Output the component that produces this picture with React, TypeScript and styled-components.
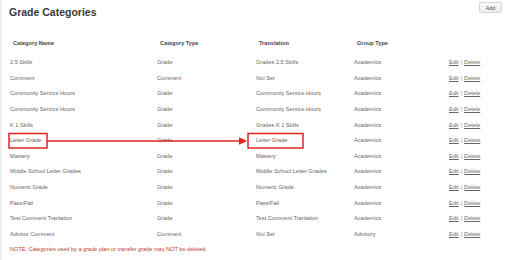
import React from 'react';
import styled, { createGlobalStyle } from 'styled-components';

const GlobalStyle = createGlobalStyle`
  html, body {
    margin: 0;
    padding: 0;
    background: #ffffff;
  }
  body {
    font-family: "Liberation Sans", Arial, sans-serif;
  }
`;

const Page = styled.div`
  position: relative;
  width: 508px;
  height: 260px;
  box-sizing: border-box;
  border-left: 2px solid #ececec;
  background: #fff;
  overflow: hidden;
`;

const TitleBar = styled.div`
  display: flex;
  justify-content: space-between;
  align-items: flex-start;
  height: 24px;
  padding: 0 6px 0 7px;
`;

const Title = styled.h1`
  margin: 0;
  line-height: 24px;
  font-size: 10.5px;
  font-weight: bold;
  color: #3a3a3a;
`;

const AddButton = styled.button`
  margin-top: 2px;
  width: 23px;
  height: 11px;
  padding: 0;
  border: 1px solid #d6d6d6;
  border-radius: 2px;
  background: linear-gradient(#fafafa, #ececec);
  font-family: inherit;
  font-size: 5.4px;
  color: #555;
`;

const Table = styled.div`
  margin-top: 11px;
  padding-left: 8px;
`;

const Row = styled.div<{ $head?: boolean }>`
  display: grid;
  grid-template-columns: 147px 99px 98px 95px 1fr;
  align-items: center;
  height: ${p => (p.$head ? '16px' : '15.65px')};
  margin-bottom: ${p => (p.$head ? '3.2px' : '0')};
  font-size: 5.6px;
  font-weight: ${p => (p.$head ? 'bold' : 'normal')};
  color: ${p => (p.$head ? '#444' : '#666')};
`;

const Cell = styled.div<{ $head?: boolean; $italic?: boolean }>`
  padding-left: ${p => (p.$head ? '3px' : '0')};
  font-style: ${p => (p.$italic ? 'italic' : 'normal')};
  white-space: nowrap;
`;

const Actions = styled.div`
  display: flex;
  gap: 2px;
  color: #888;
`;

const ActionLink = styled.a`
  color: #666;
  text-decoration: underline;
  cursor: pointer;
`;

const Note = styled.div`
  height: 15.65px;
  line-height: 15.65px;
  font-size: 5.6px;
  color: #c0392b;
`;

const Overlay = styled.svg`
  position: absolute;
  left: 0;
  top: 0;
  pointer-events: none;
`;

type Category = {
  name: string;
  type: string;
  translation: string;
  group: string;
  notSet?: boolean;
};

const categories: Category[] = [
  { name: '2.5 Skills', type: 'Grade', translation: 'Grades 2.5 Skills', group: 'Academics' },
  { name: 'Comment', type: 'Comment', translation: 'Not Set', group: 'Academics', notSet: true },
  { name: 'Community Service Hours', type: 'Grade', translation: 'Community Service Hours', group: 'Academics' },
  { name: 'Community Service Hours', type: 'Grade', translation: 'Community Service Hours', group: 'Academics' },
  { name: 'K 1 Skills', type: 'Grade', translation: 'Grades K 1 Skills', group: 'Academics' },
  { name: 'Letter Grade', type: 'Grade', translation: 'Letter Grade', group: 'Academics' },
  { name: 'Mastery', type: 'Grade', translation: 'Mastery', group: 'Academics' },
  { name: 'Middle School Letter Grades', type: 'Grade', translation: 'Middle School Letter Grades', group: 'Academics' },
  { name: 'Numeric Grade', type: 'Grade', translation: 'Numeric Grade', group: 'Academics' },
  { name: 'Pass/Fail', type: 'Grade', translation: 'Pass/Fail', group: 'Academics' },
  { name: 'Test Comment Tranlation', type: 'Grade', translation: 'Test Comment Tranlation', group: 'Academics' },
  { name: 'Advisor Comment', type: 'Comment', translation: 'Not Set', group: 'Advisory', notSet: true },
];

export default function App() {
  return (
    <>
      <GlobalStyle />
      <Page>
        <TitleBar>
          <Title>Grade Categories</Title>
          <AddButton>Add</AddButton>
        </TitleBar>

        <Table>
          <Row $head>
            <Cell $head>Category Name</Cell>
            <Cell $head>Category Type</Cell>
            <Cell $head>Translation</Cell>
            <Cell $head>Group Type</Cell>
            <Cell $head />
          </Row>
          {categories.map((c, i) => (
            <Row key={i}>
              <Cell>{c.name}</Cell>
              <Cell>{c.type}</Cell>
              <Cell $italic={c.notSet}>{c.translation}</Cell>
              <Cell>{c.group}</Cell>
              <Actions>
                <ActionLink>Edit</ActionLink>|<ActionLink>Delete</ActionLink>
              </Actions>
            </Row>
          ))}
          <Note>NOTE: Categories used by a grade plan or transfer grade may NOT be deleted.</Note>
        </Table>

        {/* annotation: red boxes and arrow */}
        <Overlay width="508" height="260" viewBox="0 0 508 260">
          <rect x="7" y="133.5" width="38" height="14.5" fill="none" stroke="#e02424" strokeWidth="1.5" />
          <rect x="246" y="133.5" width="55" height="14.5" fill="none" stroke="#e02424" strokeWidth="1.5" />
          <line x1="45" y1="141" x2="238" y2="141" stroke="#e02424" strokeWidth="1.3" />
          <polygon points="237,137.3 245,141 237,144.7" fill="#e02424" />
        </Overlay>
      </Page>
    </>
  );
}
